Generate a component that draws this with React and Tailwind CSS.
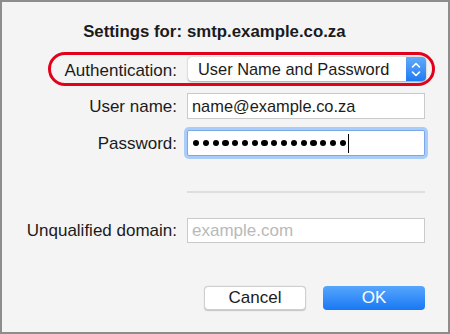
import React from "react";

function Stepper() {
  return (
    <svg width="20" height="23" viewBox="0 0 20 23" className="block">
      <path d="M6.5 9 L10 5.5 L13.5 9" fill="none" stroke="#fff" strokeWidth="1.6" strokeLinecap="round" strokeLinejoin="round" />
      <path d="M6.5 14 L10 17.5 L13.5 14" fill="none" stroke="#fff" strokeWidth="1.6" strokeLinecap="round" strokeLinejoin="round" />
    </svg>
  );
}

const dots = Array.from({ length: 16 });

export default function App() {
  return (
    <div
      className="w-[450px] h-[334px] border-2 border-[#8d8d8d] bg-[#f4f4f4] flex flex-col text-[#1b1b1b] overflow-hidden"
      style={{ fontFamily: '"Liberation Sans", Arial, sans-serif' }}
    >
      {/* header */}
      <div className="mt-[21px] h-[18px] flex items-center text-[16.8px] font-bold">
        <div className="w-[180px] text-right whitespace-nowrap">Settings for:</div>
        <div className="ml-[5px] whitespace-nowrap">smtp.example.co.za</div>
      </div>

      {/* authentication */}
      <div className="relative mt-[16px] h-[24px] flex items-center text-[17px]">
        <div className="w-[175px] text-right leading-none pt-[3px]">Authentication:</div>
        <div className="ml-[11px] w-[238px] h-[24px] flex items-stretch rounded-[4px] bg-white shadow-[0_0.5px_2px_rgba(0,0,0,0.35)] text-[16.4px]">
          <div className="flex-1 flex items-center pl-[10px] leading-none">User Name and Password</div>
          <div className="w-[20px] rounded-r-[4px] bg-gradient-to-b from-[#62aaf9] to-[#1b7af3] flex items-center justify-center">
            <Stepper />
          </div>
        </div>
        <div className="absolute left-[46px] top-[-5px] w-[387px] h-[34px] rounded-full border-[3px] border-[#e3001b]" />
      </div>

      {/* user name */}
      <div className="mt-[12px] h-[26px] flex items-center text-[17px]">
        <div className="w-[175px] text-right leading-none">User name:</div>
        <div className="ml-[10px] w-[238px] h-[26px] bg-white border border-[#cacaca] flex items-center pl-[4px] leading-none text-[16.4px]">
          name@example.co.za
        </div>
      </div>

      {/* password */}
      <div className="mt-[11px] h-[26px] flex items-center text-[17px]">
        <div className="w-[175px] text-right leading-none">Password:</div>
        <div className="ml-[10px] w-[238px] h-[26px] bg-white border border-[#79a9e8] rounded-[2px] shadow-[0_0_0_3px_#a9cdf8] flex items-center pl-[5px]">
          <div className="flex items-center gap-[3.6px]">
            {dots.map((_, i) => (
              <span key={i} className="block w-[6.2px] h-[6.2px] rounded-full bg-black" />
            ))}
          </div>
          <span className="block ml-[2px] w-[1.5px] h-[19px] bg-black" />
        </div>
      </div>

      {/* separator */}
      <div className="mt-[35px] ml-[185px] w-[238px] h-[1.5px] bg-[#dedede]" />

      {/* unqualified domain */}
      <div className="mt-[25px] h-[25px] flex items-center text-[17px]">
        <div className="w-[175px] text-right leading-none">Unqualified domain:</div>
        <div className="ml-[10px] w-[238px] h-[25px] bg-white border border-[#cacaca] flex items-center pl-[4px] leading-none text-[#b9b9b9]">
          example.com
        </div>
      </div>

      {/* buttons */}
      <div className="mt-[43px] flex pl-[202px] gap-[17px] text-[17px]">
        <button className="w-[102px] h-[24px] rounded-[4px] bg-white border border-[#cfcfcf] shadow-[0_0.5px_1px_rgba(0,0,0,0.2)] flex items-center justify-center leading-none text-[#1b1b1b]">
          Cancel
        </button>
        <button className="w-[102px] h-[24px] rounded-[4px] bg-gradient-to-b from-[#55a6fb] to-[#1677f5] flex items-center justify-center leading-none text-white">
          OK
        </button>
      </div>
    </div>
  );
}
